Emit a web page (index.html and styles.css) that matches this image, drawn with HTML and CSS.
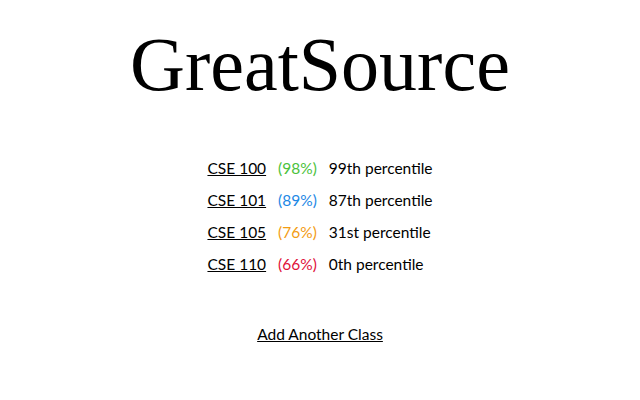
FILE: index.html
```html
<!DOCTYPE html>
<html>
<head>
<meta charset="utf-8">
<link rel="stylesheet" href="styles.css">
</head>
<body>
<main class="page">
  <h1 class="title">GreatSource</h1>
  <div class="classes">
    <a class="course" href="#">CSE 100</a><span class="pct green">(98%)</span><span class="rank">99th percentile</span>
    <a class="course" href="#">CSE 101</a><span class="pct blue">(89%)</span><span class="rank">87th percentile</span>
    <a class="course" href="#">CSE 105</a><span class="pct orange">(76%)</span><span class="rank">31st percentile</span>
    <a class="course" href="#">CSE 110</a><span class="pct red">(66%)</span><span class="rank">0th percentile</span>
  </div>
  <a class="add" href="#">Add Another Class</a>
</main>
</body>
</html>
```
FILE: styles.css
```css
html, body {
  margin: 0;
  padding: 0;
  background: #fff;
}
.page {
  display: flex;
  flex-direction: column;
  align-items: center;
  font-family: Lato, "Noto Sans", sans-serif;
  color: #000;
  font-size: 15.5px;
}
.title {
  font-family: "Liberation Serif", serif;
  font-weight: normal;
  font-size: 76px;
  line-height: 76px;
  margin: 26px 0 0 0;
}
.classes {
  display: grid;
  grid-template-columns: auto auto auto;
  column-gap: 12px;
  grid-auto-rows: 32px;
  align-items: center;
  margin-top: 50px;
}
.course, .add {
  color: #000;
  text-decoration: underline;
}
.green { color: #4cc23c; }
.blue { color: #1e88e5; }
.orange { color: #f39c12; }
.red { color: #e0103a; }
.add {
  margin-top: 45px;
}
```
